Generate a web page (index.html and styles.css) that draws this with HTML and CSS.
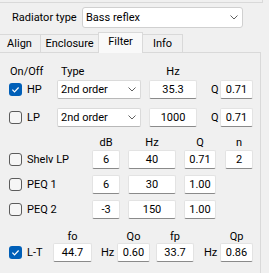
FILE: index.html
```html
<!DOCTYPE html>
<html lang="en">
<head>
    <meta charset="UTF-8">
    <meta name="viewport" content="width=device-width, initial-scale=1.0">
    <title>Filter</title>
    <link rel="stylesheet" href="styles.css">
</head>
<body>

    <div class="top-edge"></div>

    <div class="radiator">
        <span class="radiator-label">Radiator type</span>
        <div class="combo combo-wide">
            <span>Bass reflex</span>
            <svg class="chevron" width="8" height="5" viewBox="0 0 8 5"><path d="M0.5 0.5 L4 4 L7.5 0.5" /></svg>
        </div>
    </div>

    <div class="tabs">
        <div class="tab tab-align">Align</div>
        <div class="tab tab-enclosure">Enclosure</div>
        <div class="tab tab-filter active">Filter</div>
        <div class="tab tab-info">Info</div>
    </div>

    <div class="panel">
        <!-- high pass / low pass -->
        <div class="head sec-a">
            <span class="h-onoff">On/Off</span>
            <span class="h-type">Type</span>
            <span class="h-box48">Hz</span>
        </div>
        <div class="row sec-a first">
            <span class="cb checked"><svg width="13" height="13" viewBox="0 0 13 13"><rect width="13" height="13" rx="3" /><path d="M3.4 6.7 L5.5 8.8 L9.6 4.5" /></svg></span>
            <span class="name">HP</span>
            <div class="combo combo-type"><span>2nd order</span><svg class="chevron" width="8" height="5" viewBox="0 0 8 5"><path d="M0.5 0.5 L4 4 L7.5 0.5" /></svg></div>
            <div class="box w48">35.3</div>
            <span class="unit">Q</span>
            <div class="box w33">0.71</div>
        </div>
        <div class="row sec-a second">
            <span class="cb"><svg width="13" height="13" viewBox="0 0 13 13"><rect x="0.5" y="0.5" width="12" height="12" rx="2.5" /></svg></span>
            <span class="name">LP</span>
            <div class="combo combo-type"><span>2nd order</span><svg class="chevron" width="8" height="5" viewBox="0 0 8 5"><path d="M0.5 0.5 L4 4 L7.5 0.5" /></svg></div>
            <div class="box w48">1000</div>
            <span class="unit">Q</span>
            <div class="box w33">0.71</div>
        </div>

        <!-- shelving and peaking eq -->
        <div class="head sec-b">
            <span class="h-db">dB</span>
            <span class="h-box48">Hz</span>
            <span class="h-box32">Q</span>
            <span class="h-box28">n</span>
        </div>
        <div class="row sec-b first">
            <span class="cb"><svg width="13" height="13" viewBox="0 0 13 13"><rect x="0.5" y="0.5" width="12" height="12" rx="2.5" /></svg></span>
            <span class="name">Shelv LP</span>
            <div class="box w28">6</div>
            <div class="box w48">40</div>
            <div class="box w32">0.71</div>
            <div class="box w28">2</div>
        </div>
        <div class="row sec-b next">
            <span class="cb"><svg width="13" height="13" viewBox="0 0 13 13"><rect x="0.5" y="0.5" width="12" height="12" rx="2.5" /></svg></span>
            <span class="name">PEQ 1</span>
            <div class="box w28">6</div>
            <div class="box w48">30</div>
            <div class="box w32">1.00</div>
        </div>
        <div class="row sec-b next">
            <span class="cb"><svg width="13" height="13" viewBox="0 0 13 13"><rect x="0.5" y="0.5" width="12" height="12" rx="2.5" /></svg></span>
            <span class="name">PEQ 2</span>
            <div class="box w28">-3</div>
            <div class="box w48">150</div>
            <div class="box w32">1.00</div>
        </div>

        <!-- linkwitz transform -->
        <div class="head sec-c">
            <span class="h-fo">fo</span>
            <span class="h-qo">Qo</span>
            <span class="h-fp">fp</span>
            <span class="h-qp">Qp</span>
        </div>
        <div class="row sec-c">
            <span class="cb checked"><svg width="13" height="13" viewBox="0 0 13 13"><rect width="13" height="13" rx="3" /><path d="M3.4 6.7 L5.5 8.8 L9.6 4.5" /></svg></span>
            <span class="name">L-T</span>
            <div class="box w39">44.7</div>
            <span class="unit">Hz</span>
            <div class="box w33">0.60</div>
            <div class="box w38">33.7</div>
            <span class="unit">Hz</span>
            <div class="box w33">0.86</div>
        </div>
    </div>

</body>
</html>
```

FILE: styles.css
```css
body {
    margin: 0;
    width: 269px;
    height: 273px;
    overflow: hidden;
    background-color: #f0f0f0;
    font-family: Roboto, "Liberation Sans", sans-serif;
    font-size: 11px;
    line-height: 13px;
    color: #000;
}

.top-edge {
    width: 262px;
    height: 2px;
    border-right: 1px solid #d9d9d9;
    border-bottom: 1px solid #d9d9d9;
}

/* radiator type */
.radiator {
    display: flex;
    align-items: center;
    margin-top: 4px;
    height: 21px;
}
.radiator-label {
    margin-left: 12px;
    width: 70px;
}
.combo {
    display: flex;
    align-items: center;
    justify-content: space-between;
    box-sizing: border-box;
    height: 19px;
    padding: 0 4px 0 3px;
    background-color: #fff;
    border: 1px solid #dadada;
    border-bottom-color: #b8b8b8;
    border-radius: 2px;
}
.combo-wide {
    width: 161px;
    height: 21px;
    border-color: #d0d0d0;
    border-radius: 3px;
}
.chevron {
    fill: none;
    stroke: #606060;
    stroke-width: 1;
}

/* tabs */
.tabs {
    display: flex;
    align-items: flex-end;
    margin-top: 4px;
    margin-left: -2px;
    height: 20px;
}
.tab {
    box-sizing: border-box;
    height: 18px;
    padding-top: 2px;
    text-align: center;
    border: 1px solid #d9d9d9;
    border-bottom: none;
    background-color: #f0f0f0;
}
.tab + .tab {
    margin-left: -1px;
}
.tab-align { width: 43px; }
.tab-enclosure { width: 59px; }
.tab-filter { width: 45px; }
.tab-info { width: 41px; }
.tab.active {
    position: relative;
    z-index: 1;
    height: 21px;
    margin-bottom: -1px;
    background-color: #f9f9f9;
}

.panel {
    box-sizing: border-box;
    width: 263px;
    height: 230px;
    margin-left: -2px;
    padding-left: 10px;
    border: 1px solid #d9d9d9;
    background-color: #f0f0f0;
}

/* grids */
.head, .row {
    display: grid;
    align-items: center;
}
.sec-a { grid-template-columns: 13px 35px 92px 58px 13px 33px; }
.sec-b { grid-template-columns: 13px 70px 36px 56px 41px 28px; }
.sec-c { grid-template-columns: 13px 31px 44px 20px 39px 44px 20px 33px; }

.row { height: 19px; }
.head span { text-align: center; }

.sec-a.head { margin-top: 12px; }
.sec-a.first { margin-top: 2px; }
.sec-a.second { margin-top: 9px; }
.sec-b.head { margin-top: 9px; }
.sec-b.first { margin-top: 1px; }
.sec-b.next { margin-top: 6px; }
.sec-c.head { margin-top: 11px; }

.h-onoff { grid-column: 1 / span 2; text-align: left !important; padding-left: 1px; }
.h-type { text-align: left !important; padding-left: 4px; }
.h-box48 { width: 48px; }
.h-box32 { width: 32px; }
.h-box28 { width: 28px; }
.h-db { grid-column: 3; width: 28px; }
.h-fo { grid-column: 3; width: 39px; }
.h-qo { grid-column: 5; width: 33px; }
.h-fp { grid-column: 6; width: 38px; }
.h-qp { grid-column: 8; width: 33px; }

/* checkboxes */
.cb svg { display: block; }
.cb rect {
    fill: #f6f6f6;
    stroke: #5c5c5c;
    stroke-width: 1;
}
.cb.checked rect {
    fill: #005fb8;
    stroke: none;
}
.cb.checked path {
    fill: none;
    stroke: #fff;
    stroke-width: 1.2;
}

.name {
    padding-left: 5px;
    white-space: nowrap;
}
.unit {
    padding-left: 4px;
}
.combo-type {
    width: 84px;
}

/* text boxes */
.box {
    box-sizing: border-box;
    height: 19px;
    line-height: 17px;
    text-align: center;
    background-color: #fff;
    border: 1px solid #e3e3e3;
    border-bottom-color: #8a8a8a;
    border-radius: 2px;
}
.w48 { width: 48px; }
.w39 { width: 39px; }
.w38 { width: 38px; }
.w33 { width: 33px; }
.w32 { width: 32px; }
.w28 { width: 28px; }
```
